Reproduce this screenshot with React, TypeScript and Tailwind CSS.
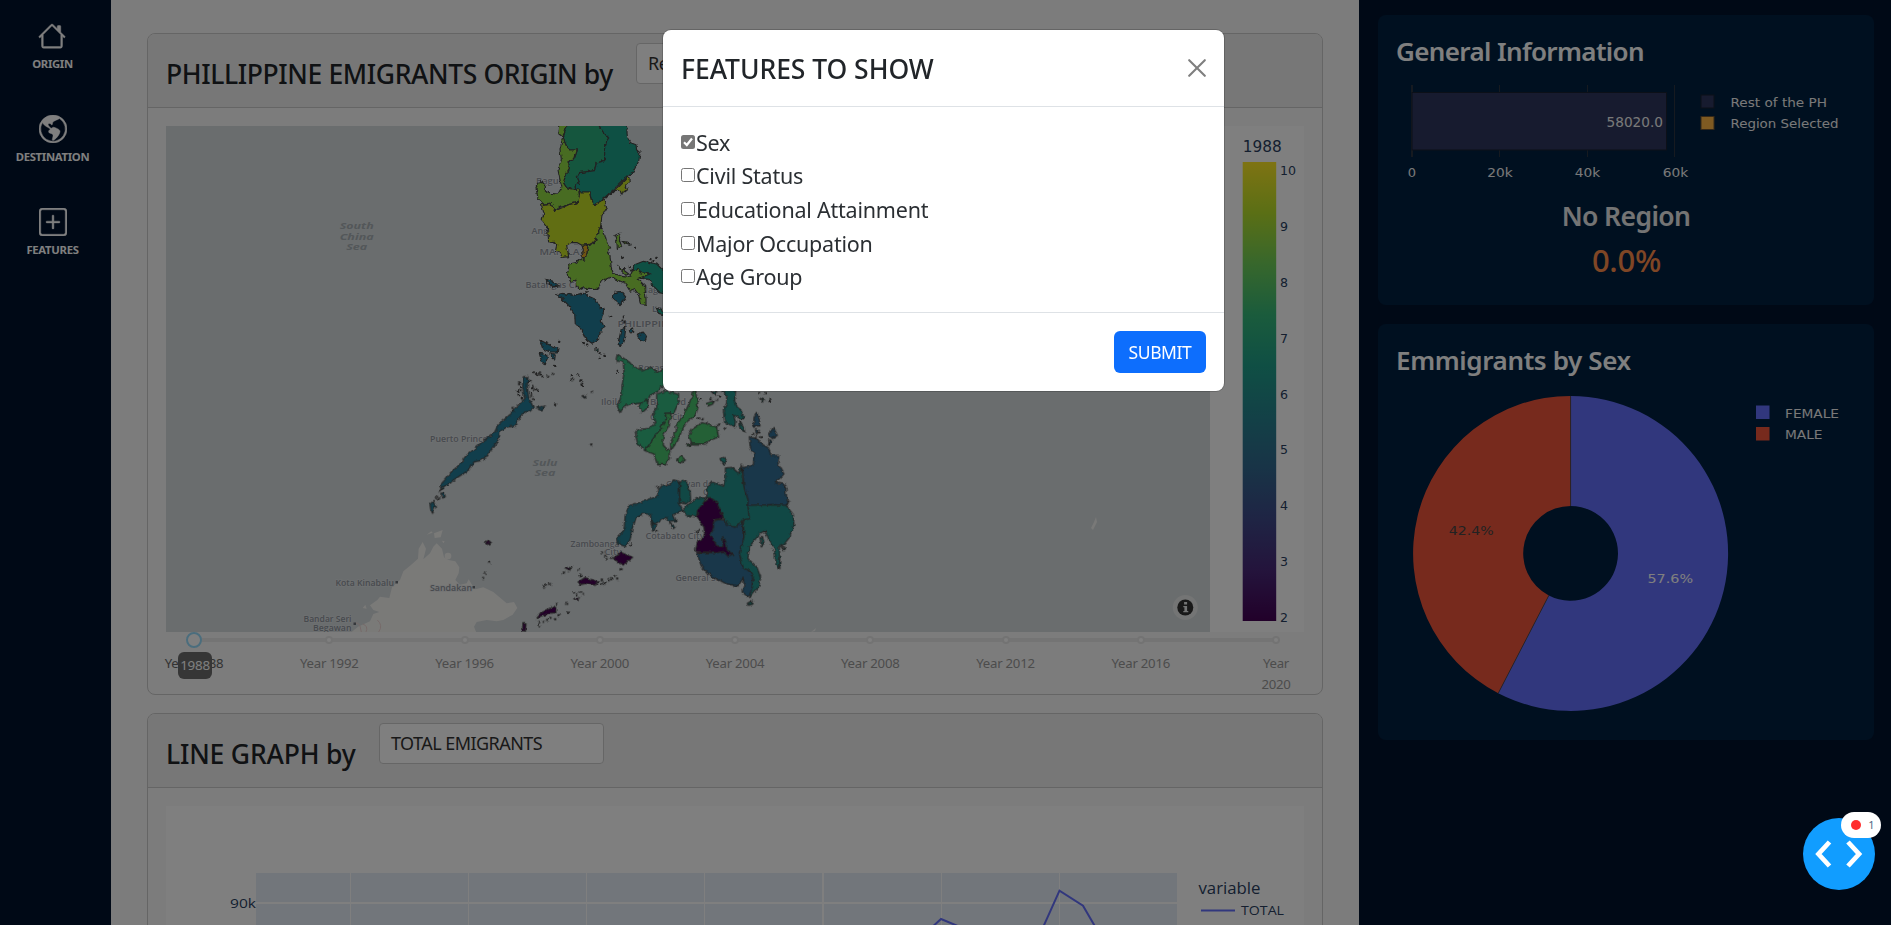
import React from "react";
import { BsHouse, BsGlobeAmericas, BsPlusSquare } from "react-icons/bs";

const VERDANA = "Verdana, 'DejaVu Sans', sans-serif";
const OPEN = "'Open Sans', 'Noto Sans', sans-serif";

type LabelProps = {
  x: number;
  y: number;
  w?: number;
  size: number;
  fill: string;
  anchor?: "start" | "middle" | "end";
  family?: string;
  weight?: number;
  italic?: boolean;
  halo?: boolean;
  children: string;
};

function Label({ x, y, w, size, fill, anchor = "start", family = VERDANA, weight = 400, italic, halo, children }: LabelProps) {
  return (
    <text
      x={x}
      y={y}
      fontSize={size}
      fill={fill}
      fontFamily={family}
      fontWeight={weight}
      fontStyle={italic ? "italic" : "normal"}
      textAnchor={anchor}
      textLength={w}
      lengthAdjust="spacingAndGlyphs"
      stroke={halo ? "#e2e5e7" : "none"}
      strokeWidth={halo ? 1.4 : 0}
      strokeOpacity={0.7}
      paintOrder="stroke"
    >
      {children}
    </text>
  );
}

const NORTH: [string, string][] = [
  ["#2cac7c", "M204,0 L200,18 190,50 194,66 200,80 212,90 232,90 222,118 206,126 208,148 196,168 190,188 200,204 226,206 226,196 238,188 232,170 238,158 268,156 284,152 288,130 314,122 314,72 326,54 308,34 298,18 298,0Z"],
  ["#1ca088", "M298,0 L298,18 308,34 326,54 314,72 314,122 288,130 284,152 238,158 232,170 238,188 226,196 226,206 240,216 268,216 274,240 284,254 310,236 350,200 384,168 398,158 416,124 420,98 410,90 408,74 392,68 382,50 380,18 380,0Z"],
  ["#90d844", "M178,0 L174,40 188,50 180,90 184,120 174,150 180,180 186,200 174,222 150,220 136,214 136,196 122,182 108,202 114,236 130,252 150,250 166,272 180,262 206,254 232,248 240,232 236,210 200,204 190,188 196,168 208,148 206,126 222,118 232,90 212,90 200,80 194,66 190,50 200,18 204,0Z"],
  ["#c2dc28", "M240,216 L268,216 274,240 284,254 304,242 350,204 386,168 388,186 374,202 384,206 364,222 360,210 344,212 320,232 312,240 320,262 306,286 302,318 290,346 286,362 264,374 246,376 232,368 212,368 200,376 206,410 186,412 180,396 166,394 170,376 160,364 146,366 142,320 126,300 132,280 124,254 150,250 166,272 206,254 232,248Z"],
  ["#90d844", "M302,324 L314,342 320,364 332,384 322,386 330,410 334,444 340,460 370,470 388,472 394,460 402,444 412,446 422,458 450,462 420,474 412,476 434,496 438,536 438,556 422,554 416,524 404,508 390,514 376,490 344,476 330,472 304,484 294,508 262,508 252,500 238,508 230,492 228,480 214,486 202,464 208,432 228,428 246,414 254,420 262,392 264,376 288,364 290,346Z"],
  ["#e0a828", "M246,376 L264,374 262,392 254,420 246,408 250,392Z"],
  ["#1ca088", "M400,436 L430,424 470,432 500,462 500,522 480,518 462,500 446,478 420,474 450,462 422,458 412,446 400,452Z"],
  ["#90d844", "M344,348 L362,340 358,360 364,376 352,388 350,360Z"],
  ["#90d844", "M352,436 L386,462 378,466 358,446Z M366,364 l14,2 8,10 -12,-4z"],
  ["#247c98", "M170,524 L190,520 220,526 246,520 286,538 300,562 312,568 304,600 312,622 296,642 296,658 276,670 256,656 240,622 226,614 224,582 206,556 184,534Z"],
  ["#247c98", "M342,518 L364,514 378,532 360,554 340,538Z"],
  ["#247c98", "M138,478 L160,484 176,498 160,500 146,492Z"],
  ["#247c98", "M364,626 L378,620 374,650 364,680 354,672Z M412,646 L430,636 440,650 436,664 418,658Z M392,624 l6,4 0,12 -8,-4z"],
  ["#247c98", "M120,660 L136,668 150,676 174,684 172,696 150,696 128,686Z M118,700 L140,704 142,714 136,734 124,722Z M150,700 l16,2 -2,18 -8,-6z"],
  ["#1ca088", "M468,562 l16,6 6,16 -14,-4z M288,682 l6,4 0,10 -6,-4z"],
];

const SOUTH: [string, string][] = [
  ["#34b880", "M652,102 L648,124 670,124 672,160 666,196 666,220 652,262 660,278 668,262 690,252 742,248 750,226 778,212 782,200 800,196 800,148 788,148 774,158 756,142 730,152 700,140 690,128Z"],
  ["#34b880", "M728,244 L742,240 744,262 726,278 718,262Z"],
  ["#34b880", "M770,222 L800,212 836,224 834,252 822,278 794,280 800,294 776,334 736,390 712,370 706,338 712,328 744,326 768,308 758,280 770,264Z"],
  ["#48c06c", "M794,280 L814,280 808,314 790,346 790,376 808,394 808,416 794,434 772,434 762,402 734,392 776,334 800,294Z"],
  ["#48c06c", "M884,190 L894,262 886,286 860,306 846,330 832,364 812,392 812,366 830,330 828,316 852,284 862,262 878,226Z"],
  ["#48c06c", "M876,328 L906,308 950,322 956,352 934,358 916,372 876,372 866,346Z M830,418 l14,-10 12,12 -14,10z M920,250 l24,-8 -6,10 -14,6z M858,374 l14,-4 -4,8z"],
  ["#20948c", "M960,416 L972,412 980,424 970,432Z M1078,234 l16,6 -6,6z M934,214 l16,0 -4,12z"],
  ["#20948c", "M960,200 L980,228 980,250 970,270 974,308 1004,320 1006,306 1000,282 1010,290 1022,296 1032,296 1024,270 1012,262 1004,240 1008,200Z M1016,302 l16,22 2,12 -14,-10z"],
  ["#306e94", "M1070,276 L1078,296 1080,318 1060,318 1062,296Z M1120,322 l12,24 -14,10 -12,-10z M1066,326 l12,6 -8,14z M1106,358 l8,4 -6,14z"],
  ["#306e94", "M1048,350 L1072,356 1082,370 1106,384 1112,406 1136,406 1134,430 1152,462 1126,488 1158,494 1158,522 1166,558 1120,554 1044,556 1040,520 1032,500 1028,442 1060,436 1062,404 1050,380Z"],
  ["#24908a", "M976,444 L996,442 1016,460 1024,432 1028,480 1034,510 1044,540 1044,556 1050,596 1030,600 1018,616 1002,624 980,612 966,580 940,540 920,532 922,500 936,486 970,498 976,488Z"],
  ["#24908a", "M848,570 L870,550 890,536 920,532 892,580 888,590 858,586Z M840,486 L854,480 870,510 872,540 858,552 838,548Z"],
  ["#24908a", "M1044,556 L1120,554 1158,556 1180,584 1182,616 1170,650 1150,676 1138,680 1140,746 1128,730 1124,690 1106,660 1096,632 1080,640 1048,680 1044,716 1070,740 1082,772 1076,800 1050,832 1042,830 1056,806 1060,770 1046,750 1028,744 1018,700 1024,674 1032,650 1030,602 1048,596Z M1080,650 l8,0 4,20 -8,8z M1144,680 l12,6 -4,6z M1042,850 l14,-8 0,10 -12,4z"],
  ["#306e94", "M950,600 L970,598 982,612 1004,622 1028,606 1030,660 1024,674 1018,700 1028,744 1046,752 1058,770 1056,806 1046,832 1026,816 1034,800 1030,774 1014,798 980,792 930,766 904,738 890,698 950,698 970,694 984,708 998,702 980,690 978,670 968,650 970,680 950,678 940,658 930,646 940,626 940,606Z"],
  ["#480054", "M930,532 L950,546 970,594 940,600 940,626 930,646 940,658 950,678 970,680 968,650 978,670 980,690 998,702 984,708 970,694 950,698 886,694 892,668 914,648 912,622 892,594 892,572 910,550Z"],
  ["#248094", "M838,484 L838,548 848,570 836,576 820,584 828,602 806,604 798,592 784,600 764,612 754,612 752,584 730,580 708,596 696,628 690,660 676,680 656,672 652,654 672,630 676,580 690,556 740,540 774,528 772,512 786,496 808,494 820,480Z M752,600 l18,18 -12,16z M808,606 l18,14 -6,6z"],
  ["#480054", "M640,714 L664,698 698,712 684,722 672,736 650,726Z M534,786 L556,772 596,786 582,796 560,790 540,794Z M408,894 L420,880 440,870 466,858 468,878 446,880 420,890Z M368,908 l10,0 -2,26 -8,-2z M256,666 l8,-4 8,8 -8,4z M524,836 l14,-4 -6,10z M494,746 l12,-4 0,10z"],
  ["#247c98", "M118,514 L126,490 150,460 180,432 196,410 226,384 250,362 282,340 292,320 306,304 330,284 346,264 364,246 374,236 368,200 370,170 384,170 382,200 386,232 400,262 392,272 368,280 356,300 346,318 320,322 300,332 296,360 280,380 262,408 240,422 222,426 206,450 160,480 150,490 136,496Z M90,552 l10,-8 6,16 -8,20 -6,-12z M122,520 l10,-2 4,12 -8,4z M410,262 l26,-4 -10,12z M546,228 l12,-2 -2,8z"],
];

const NORTH_DOTS = [
  [380, 366], [390, 372], [404, 382], [365, 412], [450, 416], [456, 422], [468, 412], [370, 446], [388, 440], [392, 450], [330, 588],
  [370, 588], [366, 600], [372, 606], [176, 664], [300, 700], [312, 706], [298, 712], [352, 754], [164, 736], [214, 764], [232, 762],
  [240, 780], [248, 796], [252, 830], [110, 758], [118, 762], [126, 768], [70, 776], [84, 784], [96, 800], [62, 800], [92, 820], [56, 824],
  [64, 834], [110, 810], [52, 812], [260, 672], [250, 668], [244, 504], [258, 514], [600, 836], [788, 840], [808, 844], [640, 816], [656, 828],
];

const SOUTH_DOTS = [
  [400, 158], [410, 162], [418, 156], [444, 166], [456, 160], [532, 162], [514, 176], [542, 180], [546, 192], [574, 214], [464, 252],
  [572, 372], [390, 182], [396, 196], [404, 206], [356, 188], [360, 210], [354, 222], [392, 226], [398, 236], [336, 262], [340, 270],
  [110, 526], [106, 532], [116, 534], [266, 726], [254, 756], [248, 772], [604, 696], [614, 706], [618, 716], [634, 712], [660, 746],
  [514, 738], [508, 744], [490, 756], [534, 746], [540, 764], [430, 798], [436, 792], [448, 790], [604, 780], [612, 786], [624, 780],
  [632, 776], [642, 766], [650, 774], [604, 792], [520, 816], [530, 822], [540, 816], [550, 820], [500, 850], [502, 876], [470, 850],
  [464, 896], [474, 884], [450, 892], [440, 898], [416, 904], [418, 918], [414, 910], [430, 904], [692, 672], [1076, 218], [1110, 238],
  [1094, 218], [930, 236], [950, 238], [1068, 350], [1056, 340], [1074, 338], [1082, 350], [1106, 372], [974, 322], [894, 294], [906, 296],
  [918, 306], [950, 316], [956, 312], [890, 632], [896, 628], [768, 632], [770, 502], [1164, 540], [1160, 552], [1156, 500],
];

const PLACES: [string, number, number, number, number][] = [
  ["Baguio", 536, 183.5, 31, 8],
  ["Angeles", 531.5, 233.5, 34, 8],
  ["MANILA", 539.5, 255, 40, 9],
  ["Batangas City", 525.5, 287.5, 60, 8],
  ["Naga", 641, 293, 22, 8],
  ["Legazpi", 652, 312, 33, 8],
  ["PHILIPPINES", 617.5, 326.8, 64, 9],
  ["Roxas", 638, 371, 26, 8],
  ["Iloilo City", 601, 405, 41, 8],
  ["Bacolod", 650, 405, 36, 8],
  ["Cebu City", 650, 420, 37, 8],
  ["Puerto Princesa", 430, 442, 67, 8],
  ["Cagayan de", 666, 486.5, 47, 8],
  ["Oro", 703, 495, 14, 8],
  ["Cotabato City", 645.5, 539.3, 59, 8],
  ["Zamboanga", 570.5, 546.5, 49, 8],
  ["City", 604.5, 554.5, 17, 8],
  ["General Santos", 675.5, 580.7, 64, 8],
  ["Sandakan", 430, 591, 42, 8],
  ["Kota Kinabalu", 335.5, 585.8, 58.5, 8],
  ["Bandar Seri", 303.5, 622, 48, 8],
  ["Begawan", 313, 631, 38.5, 8],
];

const SEAS: [string, number, number, number][] = [
  ["South", 356.7, 229, 34],
  ["China", 356.7, 239.5, 34],
  ["Sea", 356.7, 250, 21],
  ["Sulu", 545, 466, 25],
  ["Sea", 545, 476, 21],
];

const SCALE_STOPS = ["#440154", "#482878", "#3e4989", "#31688e", "#26828e", "#1f9e89", "#35b779", "#6ece58", "#b5de2b", "#fde725"];

function OriginMap() {
  return (
    <svg className="block h-[506px] w-[1138px]" viewBox="166 126 1138 506">
      <defs>
        <clipPath id="sea">
          <rect x="166" y="126" width="1044" height="506" />
        </clipPath>
        <filter id="coast" filterUnits="userSpaceOnUse" x="-100" y="-100" width="1500" height="1200">
          <feTurbulence type="fractalNoise" baseFrequency="0.25" numOctaves="2" seed="4" result="n" />
          <feDisplacementMap in="SourceGraphic" in2="n" scale="4" xChannelSelector="R" yChannelSelector="G" />
        </filter>
        <linearGradient id="viridis" x1="0" y1="1" x2="0" y2="0">
          {SCALE_STOPS.map((c, i) => (
            <stop key={c} offset={i / 9} stopColor={c} />
          ))}
        </linearGradient>
      </defs>
      <rect x="166" y="126" width="1138" height="506" fill="#ffffff" />
      <rect x="166" y="126" width="1044" height="506" fill="#d4dadc" />
      <g clipPath="url(#sea)">
        <g transform="translate(290 480) scale(.33333)" fill="#f5f4f1">
          <path d="M250,390 L240,376 262,360 270,350 298,354 306,322 330,300 340,274 362,256 384,236 386,206 398,186 408,206 400,238 420,220 430,200 440,190 456,206 462,232 476,240 496,244 508,262 506,280 496,300 510,314 530,310 536,298 546,314 556,328 580,322 610,336 650,370 672,366 682,384 668,404 640,420 620,424 590,420 560,426 552,440 560,460 180,460 204,440 240,424 250,402 268,396Z" />
          <path d="M432,160 l26,-10 -6,22 -18,2z M410,164 l14,-10 4,4z M218,384 l8,-10 4,12z M456,182 l8,2 -4,6z" />
          <circle cx="474" cy="228" r="10" />
          <path d="M190,432 q14,-8 20,6 l4,18 M218,432 q18,6 10,24 M262,420 q18,16 4,36" fill="none" stroke="#ecd4d2" strokeWidth="3" />
        </g>
        <path d="M1096,517 l1,5 -4,8 -2,-2 3,-6z M811,632 l5,-4 -1,3z" fill="#f2f2f0" />
        {SEAS.map(([t, x, y, w]) => (
          <Label key={t + y} x={x} y={y} w={w} size={9.5} fill="#a6aeb3" anchor="middle" family={OPEN} weight={700} italic>
            {t}
          </Label>
        ))}
        {PLACES.map(([t, x, y, w, s]) => (
          <Label key={t} x={x} y={y} w={w} size={s} fill="#8f949d" family={OPEN} weight={600} halo>
            {t}
          </Label>
        ))}
        <rect x="395.5" y="581" width="2.5" height="2.5" fill="#6b7078" />
        <rect x="472.5" y="586" width="2.5" height="2.5" fill="#6b7078" />
        <rect x="353.5" y="622.5" width="2.5" height="2.5" fill="#6b7078" />
        <g filter="url(#coast)">
          <g transform="translate(500 120) scale(.33333)" stroke="#444444" strokeWidth="3.4" strokeLinejoin="round">
            {NORTH.map(([c, d]) => (
              <path key={d} d={d} fill={c} />
            ))}
            {NORTH_DOTS.map(([x, y]) => (
              <rect key={`${x}-${y}`} x={x} y={y} width="3" height="3" />
            ))}
          </g>
          <g transform="translate(400 320) scale(.33333)" stroke="#444444" strokeWidth="3.4" strokeLinejoin="round">
            {SOUTH.map(([c, d]) => (
              <path key={d} d={d} fill={c} />
            ))}
            {SOUTH_DOTS.map(([x, y]) => (
              <rect key={`${x}-${y}`} x={x} y={y} width="3" height="3" />
            ))}
          </g>
        </g>
      </g>
      <circle cx="1185.3" cy="607.5" r="12.5" fill="#e8eaea" />
      <circle cx="1185.3" cy="607.5" r="8" fill="#333333" />
      <path d="M1184.1 602h3v2.6h-3z M1183.3 605.9h3.8v5h1.2v1.4h-5v-1.4h1.1v-3.6h-1.1z" fill="#e8eaea" />
      <Label x={1242.7} y={152} w={39} size={15} fill="#2a3f5f">1988</Label>
      <rect x="1242.7" y="162" width="33.5" height="459" fill="url(#viridis)" />
      {[10, 9, 8, 7, 6, 5, 4, 3, 2].map((n, i) => (
        <Label key={n} x={1280} y={174.7 + i * 55.95} size={12.6} fill="#2a3f5f">
          {String(n)}
        </Label>
      ))}
    </svg>
  );
}

function LineGraph() {
  return (
    <svg className="block h-[450px] w-[1138px]" viewBox="166 806 1138 450">
      <rect x="166" y="806" width="1138" height="450" fill="#ffffff" />
      <rect x="256" y="873" width="921" height="383" fill="#e5ecf6" />
      <g fill="#ffffff">
        {[350, 468, 586, 704, 822, 941, 1059].map((x) => (
          <rect key={x} x={x} y="873" width={x === 822 ? 2 : 1} height="383" />
        ))}
        <rect x="256" y="902" width="921" height="2" />
      </g>
      <path d="M918,940 L941,919 965,929 1000,950 1036,943 1059.5,890.7 1083,905.7 1100,935" fill="none" stroke="#636efa" strokeWidth="2" />
      <Label x={230} y={908} w={26} size={13} fill="#2a3f5f" family={OPEN}>90k</Label>
      <Label x={1198.5} y={894} w={62} size={16} fill="#2a3f5f" family={OPEN}>variable</Label>
      <path d="M1201,910.5 h34" stroke="#636efa" strokeWidth="2" />
      <Label x={1241} y={915} w={43} size={13} fill="#2a3f5f" family={OPEN}>TOTAL</Label>
    </svg>
  );
}

const YEARS = [1988, 1992, 1996, 2000, 2004, 2008, 2012, 2016, 2020];

function YearSlider() {
  return (
    <div className="relative h-[62px] px-7">
      <div className="absolute left-7 right-7 top-[6px] h-1 rounded bg-[#e9e9e9]" />
      <div className="flex justify-between pt-1">
        {YEARS.map((y) => (
          <div key={y} className="relative flex w-0 flex-col items-center">
            <span className="size-2 shrink-0 rounded-full border-2 border-[#e6e6e6] bg-white" />
            <span
              className={`mt-[9px] block shrink-0 text-center text-[13.2px] leading-[21px] tracking-[-0.25px] ${
                y === 2020 ? "w-9" : "whitespace-nowrap"
              } ${y === 1988 ? "text-[#666]" : "text-[#999]"}`}
            >
              Year {y}
            </span>
          </div>
        ))}
      </div>
      <span className="absolute left-5 top-0 size-4 rounded-full border-2 border-[#96dbfa] bg-white" />
      <span className="absolute left-[12px] top-5 flex h-[27px] w-[34px] items-center justify-center rounded-md bg-[#6c6c6c] text-[13.4px] tracking-[-0.25px] text-white">
        1988
      </span>
    </div>
  );
}

type CardProps = { title: string; titleClass: string; select: string; children: React.ReactNode };

function Card({ title, titleClass, children, select }: CardProps) {
  return (
    <section className="shrink-0 overflow-hidden rounded-lg border border-[#cacaca]">
      <header className="flex h-[74px] border-b border-[#cacaca] bg-[#efefef] pl-[18px]">
        <h3 className={`${titleClass} shrink-0 whitespace-nowrap pt-[20px] text-[26.5px] font-medium leading-[40px] text-[#212529]`}>{title}</h3>
        <div className="mt-[9px] flex h-[41px] w-[225px] items-center rounded border border-[#ccc] bg-white pl-[11px] text-[18px] tracking-[-0.55px] text-[#333]">
          {select}
        </div>
      </header>
      <div className="px-[18px] pt-[18px]">{children}</div>
    </section>
  );
}

const NAV = [
  { icon: BsHouse, label: "ORIGIN" },
  { icon: BsGlobeAmericas, label: "DESTINATION" },
  { icon: BsPlusSquare, label: "FEATURES" },
];

function GeneralChart() {
  const ink = "#f2f2f2";
  return (
    <svg className="mt-[8px] block h-[105px] w-full" viewBox="1396 78 460 105">
      <g fill="#2c3440">
        <rect x="1411" y="85" width="2" height="72" />
        <rect x="1499" y="85" width="1" height="72" />
        <rect x="1587" y="85" width="1" height="72" />
        <rect x="1674" y="85" width="1" height="72" />
      </g>
      <rect x="1412" y="92.5" width="254.5" height="57.5" fill="#2e375f" stroke="#182030" />
      <Label x={1606.5} y={126.5} w={56.5} size={13.5} fill={ink}>58020.0</Label>
      <Label x={1412} y={176.5} size={13} fill={ink} anchor="middle">0</Label>
      <Label x={1500} y={176.5} w={25.5} size={13} fill={ink} anchor="middle">20k</Label>
      <Label x={1587.5} y={176.5} w={25.5} size={13} fill={ink} anchor="middle">40k</Label>
      <Label x={1675.5} y={176.5} w={25.5} size={13} fill={ink} anchor="middle">60k</Label>
      <rect x="1701" y="95" width="13" height="13" fill="#2e375f" stroke="#182030" />
      <rect x="1701" y="116.5" width="13" height="13" fill="#fcb544" stroke="#6a5030" />
      <Label x={1730.5} y={106.5} w={96.5} size={13} fill={ink}>Rest of the PH</Label>
      <Label x={1730.5} y={127.7} w={108} size={13} fill={ink}>Region Selected</Label>
    </svg>
  );
}

function SexChart() {
  const cx = 1570.6;
  const cy = 553.4;
  const R = 157.5;
  const r = 47.4;
  const a = (0.576 * 360 * Math.PI) / 180;
  const p = (rad: number) => `${cx + rad * Math.sin(a)},${cy - rad * Math.cos(a)}`;
  return (
    <svg className="mt-[8px] block h-[335px] w-full" viewBox="1396 387 460 335">
      <path d={`M${cx},${cy - R} A${R},${R} 0 1 1 ${p(R)} L${p(r)} A${r},${r} 0 1 0 ${cx},${cy - r}Z`} fill="#636efa" />
      <path d={`M${cx},${cy - R} A${R},${R} 0 0 0 ${p(R)} L${p(r)} A${r},${r} 0 0 1 ${cx},${cy - r}Z`} fill="#ef553b" />
      <path d={`M${cx},${cy - R} V${cy - r} M${p(R)} L${p(r)}`} stroke="#444444" strokeWidth="0.8" />
      <Label x={1448.7} y={535} w={45} size={13} fill="#444444">42.4%</Label>
      <Label x={1647.5} y={583} w={45.5} size={13} fill="#ffffff">57.6%</Label>
      <rect x="1756" y="405.5" width="13.5" height="13.5" fill="#636efa" />
      <rect x="1756" y="427" width="13.5" height="13.5" fill="#ef553b" />
      <Label x={1785} y={417.7} w={54} size={13} fill="#f2f2f2">FEMALE</Label>
      <Label x={1785} y={438.7} w={37.5} size={13} fill="#f2f2f2">MALE</Label>
    </svg>
  );
}

const FEATURES = ["Sex", "Civil Status", "Educational Attainment", "Major Occupation", "Age Group"];

function FeatureModal() {
  return (
    <div className="absolute inset-0 flex items-start justify-center bg-black/50 pr-1 pt-[30px]">
      <div className="w-[561px] rounded-lg bg-white text-[#212529] shadow-[0_0_0_1px_rgba(0,0,0,0.18)]">
        <div className="flex h-[77px] items-center justify-between border-b border-[#dee2e6] px-[18px]">
          <h2 className="pt-1 text-[26.5px] font-medium tracking-[-0.05px]">FEATURES TO SHOW</h2>
          <svg className="size-[18px]" viewBox="0 0 18 18" fill="none" stroke="#7f7f7f" strokeWidth="2.1" strokeLinecap="round">
            <path d="M1.2 1.2 16.8 16.8M16.8 1.2 1.2 16.8" />
          </svg>
        </div>
        <div className="h-[206px] border-b border-[#dee2e6] pl-[18px] pt-[18px]">
          {FEATURES.map((f, i) => (
            <div key={f} className="flex h-[33.6px] items-center">
              <span
                className={
                  i === 0
                    ? "flex size-[14px] items-center justify-center rounded-[2.5px] bg-[#767676]"
                    : "size-[14px] rounded-[2.5px] border border-[#767676] bg-white"
                }
              >
                {i === 0 && (
                  <svg className="size-[14px]" viewBox="0 0 14 14" fill="none" stroke="#ffffff" strokeWidth="2.2">
                    <path d="M3 7.3 5.8 10 11 3.5" />
                  </svg>
                )}
              </span>
              <span className="pl-px pt-px text-[21.5px] leading-[33px] tracking-[-0.22px] text-[#2b2f33]">{f}</span>
            </div>
          ))}
        </div>
        <div className="flex h-[78px] items-center justify-end pr-[18px]">
          <button className="h-[42px] w-[92px] rounded-md bg-[#0d6efd] text-[17.5px] tracking-[-0.4px] text-white">SUBMIT</button>
        </div>
      </div>
    </div>
  );
}

export default function App() {
  return (
    <div className="relative flex h-[925px] w-full overflow-hidden bg-[#f8f8f8] font-['Segoe_UI','Noto_Sans','Open_Sans',sans-serif]">
      <nav className="flex w-[111px] shrink-0 flex-col items-center bg-[#00122c] pr-[6px] pt-[22px]">
        {NAV.map(({ icon: Icon, label }) => (
          <div key={label} className="flex h-[93px] flex-col items-center text-white">
            <Icon className="size-[28px]" stroke="currentColor" strokeWidth={0.25} />
            <span className="mt-[5px] text-[11.3px] font-bold leading-[18px] tracking-[-0.3px]">{label}</span>
          </div>
        ))}
      </nav>

      <main className="flex w-[1248px] shrink-0 flex-col gap-[18px] overflow-hidden px-9 pt-[33px]">
        <Card title="PHILLIPPINE EMIGRANTS ORIGIN by" titleClass="w-[470px] tracking-[-0.38px]" select="Region">
          <OriginMap />
          <YearSlider />
        </Card>
        <Card title="LINE GRAPH by" titleClass="w-[213px] tracking-[-0.18px]" select="TOTAL EMIGRANTS">
          <LineGraph />
        </Card>
      </main>

      <aside className="flex flex-1 flex-col gap-[19px] bg-[#00122c] pl-[19px] pr-[17px] pt-[15px] text-white">
        <section className="h-[290px] rounded-lg bg-[#002040] px-[18px] pt-[17px]">
          <h3 className="text-[26px] font-semibold leading-[38px] tracking-[-0.63px]">General Information</h3>
          <GeneralChart />
          <p className="pt-[13px] text-center text-[26.5px] font-semibold leading-[40px] tracking-[-0.6px] text-[#e8e8e8]">No Region</p>
          <p className="pl-px pt-px text-center text-[31px] font-medium leading-[46px] tracking-[-0.3px] text-[#ff8c4a]">0.0%</p>
        </section>
        <section className="h-[416px] rounded-lg bg-[#002040] px-[18px] pt-[17px]">
          <h3 className="text-[26px] font-semibold leading-[38px] tracking-[-0.37px]">Emmigrants by Sex</h3>
          <SexChart />
        </section>
      </aside>

      <FeatureModal />

      <div className="absolute bottom-[35px] right-4 flex size-[72px] items-center justify-center rounded-full bg-[#119dff]">
        <svg className="h-[30px] w-12" viewBox="0 0 48 30" fill="none" stroke="#ffffff" strokeWidth="4.8">
          <path d="M14.500 3 3.500 15 14.500 27M33 3 44 15 33 27" />
        </svg>
        <span className="absolute left-[38px] top-[-6px] flex h-[26px] w-10 items-center justify-center gap-[7px] rounded-full bg-white pl-1 text-[11px] text-[#506784]">
          <span className="size-[10px] rounded-full bg-[#ff2d2d]" />1
        </span>
      </div>
    </div>
  );
}
